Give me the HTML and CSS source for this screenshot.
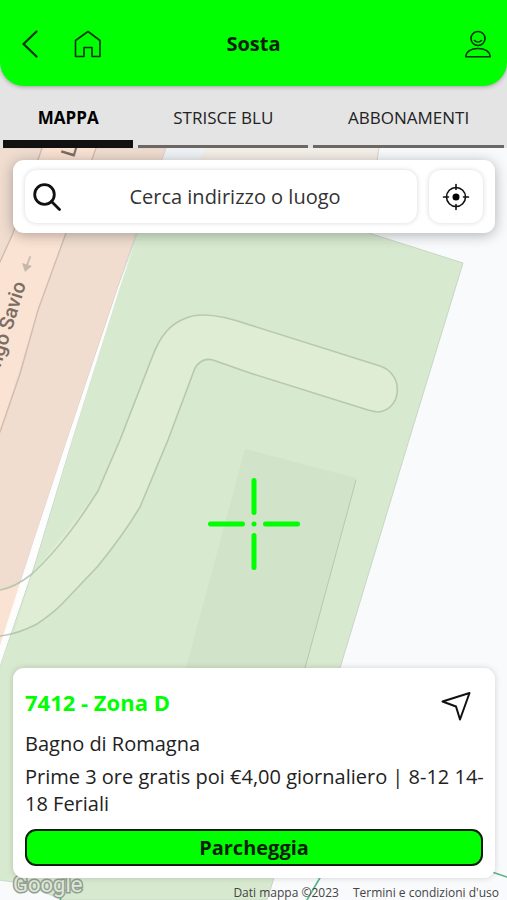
FILE: index.html
```html
<!DOCTYPE html>
<html lang="it">
<head>
<meta charset="utf-8">
<meta name="viewport" content="width=device-width, initial-scale=1">
<title>Sosta</title>
<link rel="stylesheet" href="styles.css">
</head>
<body>
<header class="topbar-wrap">
  <div class="topbar">
    <div class="topbar-side">
      <button class="icon-button" type="button" aria-label="Indietro">
        <svg width="28" height="28" viewBox="0 0 28 28"><path d="M21.500 1.500L8.500 14l13 12.500" stroke-width="2.200"/></svg>
      </button>
      <button class="icon-button" type="button" aria-label="Home">
        <svg width="28" height="28" viewBox="0 0 28 28"><path d="M2.500 10.500L15 1.500l12 9v16h-8v-9h-8v9H2.500z" stroke-width="1.600"/></svg>
      </button>
    </div>
    <h1 class="topbar-title">Sosta</h1>
    <div class="topbar-side topbar-end">
      <button class="icon-button" type="button" aria-label="Profilo">
        <svg width="28" height="28" viewBox="0 0 28 28" stroke-width="1.600"><circle cx="14" cy="8.500" r="7"/><path d="M10.500 10.500c2 2 5 2 7 0M1.800 26.800c.5-5 5-8.300 12.200-8.300s11.700 3.300 12.200 8.300z"/></svg>
      </button>
    </div>
  </div>
</header>
<nav class="tabs">
  <a class="tab tab-active" href="#mappa">MAPPA</a>
  <a class="tab" href="#strisce">STRISCE BLU</a>
  <a class="tab" href="#abbonamenti">ABBONAMENTI</a>
</nav>
<main class="map" id="mappa">
  <svg class="map-canvas" viewBox="0 148 507 752" preserveAspectRatio="xMidYMid slice" aria-hidden="true">
    <path fill="#f8fafc" d="M0 148h507v752H0z"/>
    <path fill="#f4efe8" d="M166 148h213l-12 60H150z"/>
    <path fill="#f0f3f6" d="M166 148h40l-40 70h-24z"/>
    <path fill="none" stroke="#dfd5ca" d="M379 148l-8 50"/>
    <path fill="#f0ddd0" stroke="#ddd0cb" d="M-2 148H166L136 233 118 287 67 440 33 543 0 645h-2z"/>
    <path fill="#fae3d3" d="M42 148H96L66 233 38 310 0 432V262L13 233z"/>
    <path fill="#fae3d3" d="M0 590l16-5 8-3L0 645z"/>
    <path fill="none" stroke="#d2bcaf" stroke-width="1.400" d="M42 148L13 233 0 262M96 148L66 233 38 310 20 374 0 432"/>
    <path fill="#d7e9cf" stroke="#c9d6c6" d="M137 233L120 285 72 440 35 564-1 668V880l22 3 42 17H267L340 668 409 440 463 263 372 234 350 225H140z"/>
    <path fill="#d1e3c9" d="M245 449L356 478 305 668 270 790H150L186 668z"/>
    <path fill="none" stroke="#b6c8b0" d="M356 480L305 668 290 720"/>
    <path fill="#dfedd4" d="M32 574L98 491 120 440 153 355Q164 322 193 316 212 312 250 325L380 366C405 374 402 411 377 412L368 410 250 373 213 360Q202 357 195 368L168 440 140 507Q124 534 98 566L62 604 37 624 14 633z"/>
    <path fill="#fdfdfe" d="M136 239L118 288 67 440 33 543 0 645V665L35 562 72 440 120 287z"/>
    <path fill="none" stroke="#aebfa8" stroke-opacity=".8" stroke-width="1.600" d="M0 590Q14 588 32 574C62 546 82 516 98 491L120 440 153 355Q164 326 185 318.500 205 309 250 325L380 366C405 374 402 411 377 412L368 410 250 373 213 360Q202 357 195 368L168 440 140 507Q124 534 98 566L62 604Q52 614 37 624 18 634 0 636"/>
    <path fill="none" stroke="#cabdb3" stroke-width="2" d="M30 257l-3 8"/>
    <path fill="#c5b8ae" d="M22 263l10 3-7 6z"/>
    <g class="street-name">
      <text text-anchor="end" transform="translate(26 284) rotate(-73)">Lungo Savio</text>
      <text transform="translate(74 158) rotate(-73)">L</text>
    </g>
    <path fill="none" stroke="#58b584" stroke-width="1.600" d="M321 876l-14 24M492 872l15 5M65 890l-5 10"/>
  </svg>
  <svg class="crosshair" width="94" height="94" viewBox="0 0 94 94" aria-hidden="true">
    <path d="M47 3.500v32M47 58.500v32M3.500 47h32M58.500 47h32M47 47h.01"/>
  </svg>
  <span class="map-brand">Google</span>
  <div class="search-panel">
    <label class="search-field">
      <svg width="28" height="28" viewBox="0 0 28 28" stroke-width="2.800" aria-hidden="true"><circle cx="11.500" cy="11.500" r="9.800"/><path d="M18.500 18.500l8 8"/></svg>
      <input class="search-input" type="text" placeholder="Cerca indirizzo o luogo" aria-label="Cerca indirizzo o luogo">
    </label>
    <button class="locate-button" type="button" aria-label="La mia posizione">
      <svg width="28" height="28" viewBox="0 0 28 28" stroke-width="1.600"><circle cx="14" cy="14" r="9.500"/><circle class="dot" cx="14" cy="14" r="3.500"/><path d="M14 1.500v5M14 21.500v5M1.500 14h5M21.500 14h5"/></svg>
    </button>
  </div>
  <section class="zone-card">
    <div class="zone-head">
      <h2 class="zone-title">7412 - Zona D</h2>
      <button class="icon-button" type="button" aria-label="Indicazioni">
        <svg width="32" height="32" viewBox="0 0 32 32" stroke-width="2"><path d="M2.500 11.500L29.500 3 20 29.500 16 16.500z"/></svg>
      </button>
    </div>
    <p class="zone-text zone-city">Bagno di Romagna</p>
    <p class="zone-text">Prime 3 ore gratis poi €4,00 giornaliero | 8-12 14-<wbr>18 Feriali</p>
    <button class="park-button" type="button">Parcheggia</button>
  </section>
  <footer class="credits">
    <span>Dati mappa ©2023</span>
    <a href="#termini">Termini e condizioni d'uso</a>
  </footer>
</main>
</body>
</html>
```
FILE: styles.css
```css
* {
  box-sizing: border-box;
}

body {
  margin: 0;
  min-height: 100vh;
  display: flex;
  flex-direction: column;
  background: #e4e4e4;
  color: #222;
  font-family: "Open Sans", "Noto Sans", sans-serif;
  font-size: 20px;
}

h1, h2, p {
  margin: 0;
}

svg {
  display: block;
  fill: none;
  stroke: #111;
  stroke-linejoin: round;
  stroke-linecap: round;
}

button {
  padding: 0;
  border: 0;
  background: none;
  font: inherit;
  color: inherit;
}

.topbar {
  display: grid;
  grid-template-columns: 1fr auto 1fr;
  align-items: center;
  height: 86px;
  padding: 2px 15px 0;
  background: #0f0;
  border-radius: 0 0 24px 24px;
  box-shadow: 0 1px 4px rgba(0, 0, 0, 0.3);
}

.topbar-side {
  display: flex;
  gap: 30px;
}

.topbar-end {
  justify-content: flex-end;
}

.topbar-title {
  font-size: 20px;
  line-height: 24px;
  color: #0a1f0a;
}

.topbar svg {
  stroke: #063006;
}

.tabs {
  display: flex;
  gap: 5px;
  height: 62px;
  padding: 0 3px;
}

.tab {
  flex: 1 1 auto;
  padding-top: 20px;
  border-bottom: 3px solid #6a6764;
  color: #222;
  font-size: 17px;
  line-height: 24px;
  text-align: center;
  text-decoration: none;
}

.tab-active {
  border-bottom: 8px solid #111;
  color: #000;
  font-weight: 700;
}

.map {
  position: relative;
  flex: 1;
  display: flex;
  flex-direction: column;
  padding: 12px 12px 0 13px;
  overflow: hidden;
}

.map-canvas {
  position: absolute;
  inset: 0;
  width: 100%;
  height: 100%;
  stroke: none;
}

.street-name {
  fill: #7b6d64;
  font-family: Roboto, sans-serif;
  font-size: 20px;
  font-weight: 500;
}

.crosshair {
  position: absolute;
  top: 50%;
  left: 50%;
  transform: translate(-50%, -50%);
  stroke: #0f0;
  stroke-width: 5;
}

.map-brand {
  position: absolute;
  left: 13px;
  bottom: 1px;
  color: #dfe6dc;
  font-family: Roboto, sans-serif;
  font-size: 22px;
  font-weight: 400;
  line-height: 28px;
  -webkit-text-stroke: 3px #93a08f;
  paint-order: stroke fill;
}

.search-panel {
  position: relative;
  display: flex;
  gap: 12px;
  padding: 10px 12px;
  background: #fff;
  border-radius: 11px;
  box-shadow: 0 2px 14px rgba(0, 0, 0, 0.3);
}

.search-field,
.locate-button {
  display: flex;
  align-items: center;
  height: 53px;
  background: #fff;
  border-radius: 12px;
  box-shadow: 0 0 5px rgba(0, 0, 0, 0.16);
}

.search-field {
  flex: 1;
  min-width: 0;
  padding: 0 8px;
}

.search-input {
  flex: 1;
  min-width: 0;
  padding: 0;
  border: 0;
  outline: 0;
  background: none;
  font: inherit;
  text-align: center;
}

.search-input::placeholder {
  color: #333;
}

.locate-button {
  justify-content: center;
  width: 54px;
}

.dot {
  fill: #000;
  stroke: none;
}

.zone-card {
  position: relative;
  margin-top: auto;
  padding: 18px 12px 12px;
  background: #fff;
  border-radius: 11px;
  box-shadow: 0 0 6px rgba(0, 0, 0, 0.16);
}

.zone-head {
  display: flex;
  justify-content: space-between;
  align-items: center;
  height: 40px;
  padding-right: 11px;
}

.zone-title {
  padding-bottom: 8px;
  color: #0f0;
  font-size: 22px;
  line-height: 32px;
}

.zone-text {
  margin-right: -6px;
  line-height: 27px;
}

.zone-city {
  margin-top: 4px;
  margin-bottom: 6px;
}

.park-button {
  display: block;
  width: 100%;
  height: 37px;
  margin-top: 12px;
  background: #0f0;
  border: 2px solid #0a1f0a;
  border-radius: 11px;
  color: #0a1f0a;
  font-weight: 700;
  line-height: 24px;
}

.credits {
  position: relative;
  display: flex;
  justify-content: flex-end;
  gap: 14px;
  height: 22px;
  margin-right: -4px;
  padding-top: 6px;
  font-size: 12px;
  line-height: 18px;
  color: #444;
}

.credits a {
  color: inherit;
  text-decoration: none;
}
```
